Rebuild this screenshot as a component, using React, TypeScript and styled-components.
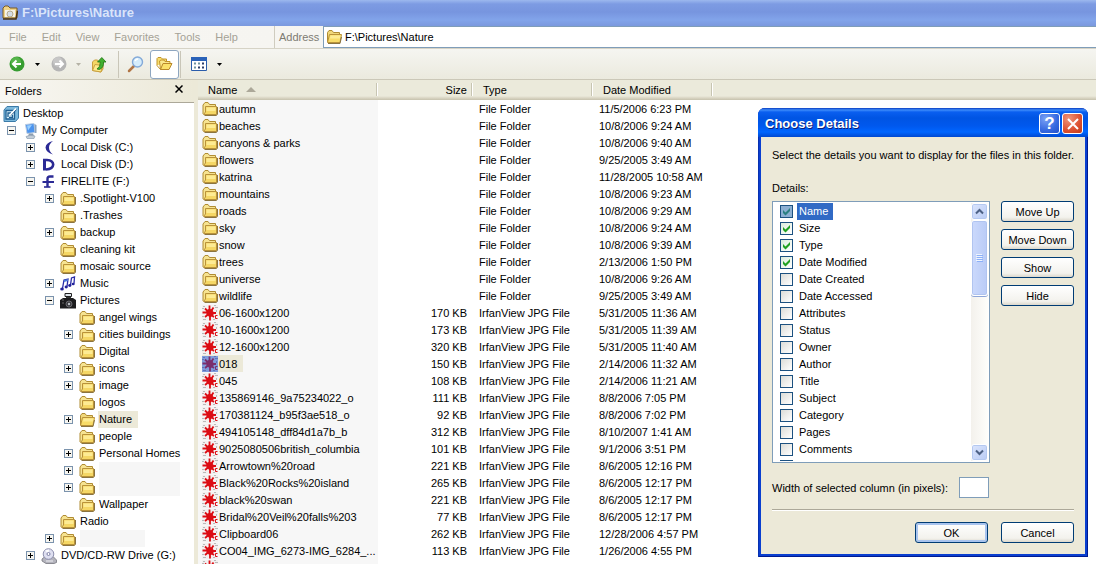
import React from "react";
import styled, { createGlobalStyle, css } from "styled-components";

const GlobalStyle = createGlobalStyle`
  * { box-sizing: border-box; }
  html, body { margin: 0; padding: 0; }
  body, button, input, table {
    font-family: "Liberation Sans", Arial, sans-serif;
    font-size: 11px;
    line-height: 16px;
    color: #000;
  }
  button { cursor: default; }
`;

const Window = styled.div`
  position: relative;
  display: flex;
  flex-direction: column;
  height: 100vh;
  min-height: 560px;
  overflow: hidden;
  background: #fff;
`;

/* ---------- window chrome ---------- */

const TitleBar = styled.header`
  display: flex;
  align-items: center;
  gap: 4px;
  flex: none;
  height: 26px;
  padding: 0 0 0 2px;
  background: linear-gradient(#9cb8ee 0, #7d9be3 4px, #7795df 12px, #82a4ea 20px, #7b99de 26px);
  color: #d9e4fa;
`;

const WindowTitle = styled.h1`
  margin: 0;
  font-size: 13px;
  line-height: 16px;
  font-weight: bold;
`;

const MenuRow = styled.div`
  display: flex;
  flex: none;
  height: 23px;
  background: linear-gradient(90deg, #f7f6f2, #f3f2ee);
  border-bottom: 1px solid #d6d3c6;
`;

const MenuBar = styled.nav`
  display: flex;
  align-items: center;
  width: 275px;
  flex: none;
  padding-left: 2px;
  border-right: 1px solid #cfccbf;
`;

const MenuItem = styled.button`
  padding: 0 8px 0 7px;
  border: 0;
  background: none;
  color: #a5a296;
`;

const AddressLabel = styled.label`
  display: flex;
  align-items: center;
  width: 48px;
  flex: none;
  padding-left: 4px;
  color: #7d7b72;
`;

const AddressBox = styled.div`
  display: flex;
  flex: 1;
  align-items: center;
  gap: 3px;
  padding-left: 2px;
  background: #fff;
  border: 1px solid #7f9db9;
  border-right: 0;
`;

const AddressInput = styled.input`
  flex: 1;
  min-width: 0;
  padding: 0;
  border: 0;
  outline: 0;
  background: none;
`;

const ToolBar = styled.div`
  display: flex;
  align-items: center;
  flex: none;
  height: 31px;
  padding-left: 8px;
  background: linear-gradient(#f5f5f1, #ebeade);
  border-bottom: 1px solid #cbc8b8;
`;

const ToolButton = styled.button<{ $w: number; $pressed?: boolean }>`
  display: flex;
  align-items: center;
  justify-content: center;
  width: ${(p) => p.$w}px;
  height: 29px;
  padding: 0;
  border: 1px solid transparent;
  border-radius: 3px;
  background: none;
  ${(p) =>
    p.$pressed &&
    css`
      background: #fff;
      border-color: #8ea6c0;
    `}
`;

const Divider = styled.span<{ $space?: boolean }>`
  width: 1px;
  height: 27px;
  margin: 0 1px 0 ${(p) => (p.$space ? 9 : 1)}px;
  background: #c9c6b8;
`;

const Main = styled.main`
  display: flex;
  flex: 1;
  min-height: 0;
`;

/* ---------- folder tree ---------- */

const Sidebar = styled.aside`
  display: flex;
  flex-direction: column;
  width: 194px;
  flex: none;
`;

const SidebarHead = styled.div`
  display: flex;
  align-items: center;
  justify-content: space-between;
  height: 23px;
  flex: none;
  padding: 0 11px 0 5px;
  background: linear-gradient(90deg, #f8f7f3, #ece9d8);
  border-bottom: 1px solid #aca899;
`;

const CloseButton = styled.button`
  display: flex;
  align-items: center;
  height: 16px;
  padding: 0 0 5px;
  border: 0;
  background: none;
`;

const Tree = styled.ul`
  flex: 1;
  min-height: 0;
  overflow: hidden;
  margin: 0;
  padding: 2px 0 0;
  list-style: none;
  background: #fff;
`;

const TreeRow = styled.li<{ $level: number }>`
  display: flex;
  align-items: center;
  height: 17px;
  padding-left: ${(p) => 3 + 19 * Math.max(0, p.$level - 1)}px;
`;

const ExpanderSlot = styled.span`
  display: flex;
  width: 19px;
  flex: none;
  padding-left: 4px;
`;

const Expander = styled.button`
  width: 9px;
  height: 9px;
  padding: 0;
  display: flex;
  border: 0;
  background: none;
`;

const TreeLabel = styled.span<{ $selected?: boolean }>`
  margin-left: 3px;
  padding: 0 6px 0 1px;
  line-height: 17px;
  white-space: nowrap;
  background: ${(p) => (p.$selected ? "#ece9d8" : "transparent")};
`;

const BlankLabel = styled.span<{ $w: number }>`
  width: ${(p) => p.$w}px;
  height: 17px;
  margin-left: 4px;
  background: #f6f6f6;
`;

const Splitter = styled.div`
  width: 4px;
  flex: none;
  background: #ece9d8;
`;

/* ---------- file list ---------- */

const ListPane = styled.section`
  flex: 1;
  min-width: 0;
  overflow: hidden;
  background: #fff;
`;

const FileTable = styled.table`
  width: 100%;
  table-layout: fixed;
  border-collapse: separate;
  border-spacing: 0;
`;

const Col = styled.col<{ $w?: number }>`
  width: ${(p) => (p.$w ? `${p.$w}px` : "auto")};
`;

const HeadCell = styled.th<{ $right?: boolean }>`
  position: relative;
  height: 20px;
  padding: 0 6px 0 10px;
  font-weight: normal;
  text-align: ${(p) => (p.$right ? "right" : "left")};
  background: linear-gradient(#ebeadb 0, #ebeadb 16px, #d9d5c3 18px, #c6c2ae 20px);
  &:not(:last-child)::after {
    content: "";
    position: absolute;
    right: 0;
    top: 3px;
    width: 2px;
    height: 13px;
    background: linear-gradient(90deg, #c7c5b2 50%, #fff 50%);
  }
`;

const SortArrow = styled.span`
  display: inline-block;
  margin-left: 9px;
  border: 5px solid transparent;
  border-top: 0;
  border-bottom-color: #aca899;
  vertical-align: 2px;
`;

const Cell = styled.td<{ $right?: boolean; $name?: boolean }>`
  height: 17px;
  padding: 0 6px;
  white-space: nowrap;
  text-align: ${(p) => (p.$right ? "right" : "left")};
  ${(p) =>
    p.$name &&
    css`
      padding: 0 0 0 4px;
      background: #f7f7f7;
    `}
`;

const FileName = styled.span<{ $selected?: boolean }>`
  display: flex;
  align-items: center;
  width: max-content;
  height: 17px;
  padding-right: 6px;
  gap: 1px;
  ${(p) =>
    p.$selected &&
    css`
      background: #ece9d8;
    `}
`;

/* ---------- dialog ---------- */

const Dialog = styled.section`
  position: absolute;
  top: 108px;
  right: 8px;
  width: 330px;
  padding: 0 3px 3px;
  background: #0a3fd0;
  border-radius: 7px 7px 0 0;
  box-shadow: inset 1px 0 #0831b0, inset -1px -1px #001a90;
`;

const DialogTitle = styled.div`
  display: flex;
  align-items: center;
  gap: 2px;
  height: 29px;
  margin: 0 -3px;
  padding: 2px 5px 0 7px;
  border-radius: 7px 7px 0 0;
  background: linear-gradient(#0a3cc0 0, #3d8cfa 2px, #0a5ff0 4px, #0054e3 10px, #0058ee 18px, #0066ff 24px, #0048d0 29px);
`;

const DialogHeading = styled.h2`
  flex: 1;
  margin: 0;
  font-size: 13px;
  line-height: 16px;
  color: #fff;
  text-shadow: 1px 1px #0f1f78;
`;

const CaptionButton = styled.button<{ $danger?: boolean }>`
  display: flex;
  align-items: center;
  justify-content: center;
  width: 21px;
  height: 21px;
  padding: 0;
  border: 1px solid #fff;
  border-radius: 3px;
  color: #fff;
  font-size: 17px;
  font-weight: bold;
  background: ${(p) =>
    p.$danger
      ? "radial-gradient(circle at 30% 25%, #f0957a, #dc5030 60%, #c03a18)"
      : "radial-gradient(circle at 30% 25%, #7ba2f5, #3568e0 60%, #2350c8)"};
`;

const DialogBody = styled.form`
  display: flex;
  flex-direction: column;
  padding: 10px 11px 11px;
  background: #ece9d8;
`;

const Text = styled.p<{ $gap: number }>`
  margin: 0 0 ${(p) => p.$gap}px;
  white-space: nowrap;
`;

const Columns = styled.div`
  display: flex;
  gap: 11px;
`;

const DetailBox = styled.div`
  display: flex;
  flex: 1;
  height: 262px;
  padding: 1px;
  border: 1px solid #7f9db9;
  background: #fff;
`;

const DetailList = styled.div`
  flex: 1;
  overflow: hidden;
`;

const DetailRow = styled.label`
  display: flex;
  align-items: center;
  height: 17px;
  padding-left: 6px;
`;

const Check = styled.input<{ $dim?: boolean }>`
  appearance: none;
  width: 13px;
  height: 13px;
  flex: none;
  margin: 0 4px 0 0;
  border: 1px solid #1c5180;
  background: linear-gradient(135deg, #dcdcd7, #fff);
  &:checked {
    background: url("data:image/svg+xml,%3Csvg xmlns='http://www.w3.org/2000/svg' width='11' height='11'%3E%3Cpath d='M2 4v3l2.500 2.500L9 5V2L4.500 6.500z' fill='%2321a121'/%3E%3C/svg%3E"),
      linear-gradient(135deg, #dcecdc, #fff);
  }
  ${(p) =>
    p.$dim &&
    css`
      &:checked {
        background: url("data:image/svg+xml,%3Csvg xmlns='http://www.w3.org/2000/svg' width='11' height='11'%3E%3Cpath d='M2 4v3l2.500 2.500L9 5V2L4.500 6.500z' fill='%232a7f80'/%3E%3C/svg%3E"),
          #8cafd2;
      }
    `}
`;

const DetailName = styled.span<{ $selected?: boolean }>`
  padding: 0 5px 0 2px;
  line-height: 17px;
  ${(p) =>
    p.$selected &&
    css`
      background: #316ac5;
      color: #fff;
    `}
`;

const ScrollTrack = styled.div`
  display: flex;
  flex-direction: column;
  width: 17px;
  flex: none;
  background: linear-gradient(90deg, #f3f1ec, #fefefb);
`;

const ScrollButton = styled.button`
  display: flex;
  align-items: center;
  justify-content: center;
  height: 17px;
  flex: none;
  padding: 0;
  border: 1px solid #fff;
  border-radius: 3px;
  background: linear-gradient(135deg, #dbe5fd, #b9cbf4);
  box-shadow: inset 0 0 0 1px #b4c8f0;
`;

const ScrollThumb = styled.div`
  display: flex;
  align-items: center;
  justify-content: center;
  height: 76px;
  border: 1px solid #fff;
  border-radius: 3px;
  background: linear-gradient(90deg, #cbd9fc, #b9cbf6);
  box-shadow: inset 0 0 0 1px #b0c4f0, 0 1px #8ea6d8;
`;

const ScrollSpace = styled.div`
  flex: 1;
`;

const ButtonStack = styled.div`
  display: flex;
  flex-direction: column;
  gap: 7px;
`;

const PushButton = styled.button<{ $primary?: boolean }>`
  width: 73px;
  height: 21px;
  padding: 0;
  border: 1px solid #003c74;
  border-radius: 3px;
  background: linear-gradient(#fff, #f3f2ed 80%, #dcd8cc);
  ${(p) => p.$primary && "box-shadow: inset 0 0 0 2px #a9c4ee;"}
`;

const WidthRow = styled.div`
  display: flex;
  align-items: center;
  justify-content: space-between;
  width: 217px;
  margin-top: 14px;
`;

const WidthInput = styled.input`
  width: 30px;
  height: 21px;
  padding: 0 2px;
  border: 1px solid #7f9db9;
  background: #fff;
`;

const Rule = styled.hr`
  width: 100%;
  height: 2px;
  margin: 11px 0;
  border: 0;
  background: linear-gradient(#aca899 50%, #fff 50%);
`;

const Actions = styled.div`
  display: flex;
  justify-content: flex-end;
  gap: 13px;
`;

/* ---------- icons ---------- */

const Icon = styled.svg`
  display: block;
  flex: none;
`;

const FolderIcon = () => (
  <Icon width="16" height="16" viewBox="0 0 16 16">
    <path d="M1 13V4L3 1.500H6L7.500 3.500H13.500V6" fill="#f6e391" stroke="#b08c33" />
    <path d="M2.500 14.500H14l1.500-1.500V6" fill="none" stroke="#8a7440" strokeWidth="1.200" />
    <path d="M3.500 5.500H14.500V13.500H1.500L3.500 11z" fill="#f5d765" stroke="#b9923a" />
    <path d="M4.500 6.500H13.500V10H4.500z" fill="#fdeb94" />
  </Icon>
);

const OpenFolderIcon = () => (
  <Icon width="16" height="16" viewBox="0 0 16 16">
    <path d="M1.500 13V3.500L3 1.500H6L7.500 3.500H13.500V6" fill="#f0d77a" stroke="#b08c33" />
    <path d="M1.500 13.500L3.500 5.500H15.500L14 13.500z" fill="#f8dc68" stroke="#b9923a" />
    <path d="M4.500 6.500H14.500L14 9.500H4z" fill="#fdeb94" />
    <path d="M2 14.500H14L15.500 8" fill="none" stroke="#8a7440" />
  </Icon>
);

const TitleFolderIcon = () => (
  <Icon width="16" height="16" viewBox="0 0 16 16">
    <path d="M1 13V3L3 1H6L8 3H15V13z" fill="#f0d488" stroke="#7b5b22" />
    <path d="M3 5H13V12H3z" fill="#f6f3ea" />
    <circle cx="8" cy="9" r="3" fill="#d5dde6" stroke="#b5a98a" />
    <path d="M1 14H14L15.500 6" fill="none" stroke="#4b3515" strokeWidth="1.500" />
  </Icon>
);

const BackIcon = ({ disabled = false }: { disabled?: boolean }) => (
  <Icon width="16" height="16" viewBox="0 0 16 16">
    <circle cx="8" cy="8" r="7.500" fill={disabled ? "#b5b5b5" : "#379d31"} />
    <circle cx="7" cy="6" r="5" fill={disabled ? "#cecece" : "#62bd55"} opacity="0.700" />
    <path
      d={disabled ? "M4 8H12M8.500 4.500L12 8L8.500 11.500" : "M12 8H4M7.500 4.500L4 8L7.500 11.500"}
      fill="none"
      stroke="#fff"
      strokeWidth="2"
    />
  </Icon>
);

const DropIcon = ({ color = "#000" }: { color?: string }) => (
  <Icon width="5" height="3" viewBox="0 0 5 3">
    <path d="M0 0H5L2.500 3z" fill={color} />
  </Icon>
);

const UpIcon = () => (
  <Icon width="16" height="17" viewBox="0 0 16 17">
    <path d="M1.500 14.500V6L3.500 4H6.500L7.500 5.500H12V13L10 16z" fill="#f4d765" stroke="#c9a040" />
    <path d="M1.500 14.500L4 8.500L11.500 9.500L10 16z" fill="#fdeb8d" stroke="#c9a040" />
    <path d="M6 13Q9.500 11 9.300 6H6.500L10.800 1.500L15 6H12.500Q13 11.500 8.500 13.500z" fill="#41b02f" stroke="#1f7514" strokeWidth="0.800" />
  </Icon>
);

const SearchIcon = () => (
  <Icon width="17" height="17" viewBox="0 0 17 17">
    <path d="M2 15L7 10" stroke="#b17545" strokeWidth="2.500" strokeLinecap="round" />
    <circle cx="10.500" cy="6" r="5" fill="#d5ecfb" stroke="#83a9d8" strokeWidth="1.400" />
    <path d="M8 5Q9 3 11 3" fill="none" stroke="#fff" strokeWidth="1.500" />
  </Icon>
);

const FoldersIcon = () => (
  <Icon width="17" height="16" viewBox="0 0 17 16">
    <path d="M1 9.500V2.500L2 1.500H5L6.500 3H10.500V6" fill="#f7dd6d" stroke="#c2942b" />
    <path d="M4.500 13.500L3.500 5L5 4H8L9 5.500H14V8" fill="#fae88d" stroke="#c2942b" />
    <path d="M1 9.500L4.500 13.500" stroke="#c2942b" />
    <path d="M4.500 13.500L7 7.500H16L13 13.500z" fill="#fbe16a" stroke="#b9882a" />
  </Icon>
);

const ViewsIcon = () => (
  <Icon width="16" height="14" viewBox="0 0 16 14">
    <path d="M0.500 0.500H15.500V13.500H0.500z" fill="#fff" stroke="#2a5caa" />
    <path d="M0 0H16V4H0z" fill="#2a62b8" />
    <path d="M3 5.500h2v2h-2zM7 5.500h2v2h-2zM3 9.500h2v2h-2z" fill="#6e93a0" />
    <path d="M11 5.500h2v2h-2zM7 9.500h2v2h-2zM11 9.500h2v2h-2z" fill="#2c3e6b" />
  </Icon>
);

const CloseIcon = () => (
  <Icon width="8" height="8" viewBox="0 0 8 8">
    <path d="M0.500 0.500L7.500 7.500M7.500 0.500L0.500 7.500" stroke="#000" strokeWidth="1.500" />
  </Icon>
);

const DesktopIcon = () => (
  <Icon width="16" height="16" viewBox="0 0 16 16">
    <path d="M1 4L4 0.500H15.500V12L12.500 15.500H1z" fill="#7db9dc" stroke="#3b7ba8" />
    <path d="M3 4.500H11.500V13H3z" fill="#d8f1fb" stroke="#1f5f92" strokeWidth="1.300" />
    <path d="M5 11V7H8M6 11.500H9.500V9" fill="none" stroke="#1f5f92" strokeWidth="1.300" />
    <path d="M7 9L13 2.500" stroke="#fff" strokeWidth="1.800" />
    <path d="M8 9.500L13.500 3.500" stroke="#1f4f82" strokeWidth="0.800" />
  </Icon>
);

const ComputerIcon = () => (
  <Icon width="16" height="16" viewBox="0 0 16 16">
    <path d="M3.500 1.500L12 0.500L13 9.500L5 10.500z" fill="#4b93ee" stroke="#b9cbe0" />
    <path d="M5 2.500L10 2L6 7.500z" fill="#9bd0ff" />
    <path d="M12.500 1L14.500 2V10L13 10z" fill="#8aa2bd" />
    <path d="M7 10.500H11L12 13H6z" fill="#8c9db0" />
    <path d="M4 13.500Q8 11.500 13 13L12 15.500H5z" fill="#c4ced8" stroke="#8fa1b3" strokeWidth="0.700" />
  </Icon>
);

const DriveCIcon = () => (
  <Icon width="16" height="16" viewBox="0 0 16 16">
    <path d="M12 1Q5 2.500 4.500 7.500Q5 12.500 12 14.500Q8 11.500 8 7.500Q8 4 12 1z" fill="#2b2a95" />
  </Icon>
);

const DriveDIcon = () => (
  <Icon width="16" height="16" viewBox="0 0 16 16">
    <path d="M3.500 2V13.500" stroke="#2b2a95" strokeWidth="3" />
    <path d="M2 3H6Q12 3.500 12.200 7.500Q12 12 5 12.500" fill="none" stroke="#2b2a95" strokeWidth="2.600" />
  </Icon>
);

const DriveFIcon = () => (
  <Icon width="16" height="16" viewBox="0 0 16 16">
    <path d="M6.500 13V5Q6.500 2.500 9 2.500H12.500" fill="none" stroke="#2b2a95" strokeWidth="2.400" />
    <path d="M1.500 8H13" stroke="#2b2a95" strokeWidth="2" />
    <path d="M3 13H9.500" stroke="#2b2a95" strokeWidth="1.600" />
  </Icon>
);

const MusicIcon = () => (
  <Icon width="16" height="16" viewBox="0 0 16 16">
    <path d="M2.500 12.500L4 4L8 3L7 10.500M10.500 9L11.500 2L14.500 1L14 7.500" fill="none" stroke="#2a2ca8" strokeWidth="1.300" />
    <path d="M4 4L8 3V5L4 6z" fill="#4a78d8" />
    <ellipse cx="2" cy="13" rx="1.800" ry="1.500" fill="#23239a" />
    <ellipse cx="6.200" cy="11" rx="1.600" ry="1.400" fill="#23239a" />
    <ellipse cx="9.800" cy="9.500" rx="1.600" ry="1.400" fill="#23239a" />
    <ellipse cx="13.200" cy="8" rx="1.500" ry="1.300" fill="#23239a" />
  </Icon>
);

const CameraIcon = () => (
  <Icon width="16" height="16" viewBox="0 0 16 16">
    <path d="M5 0.500H11.500V3.500H5z" fill="#dfe6ec" stroke="#222" />
    <path d="M6 4H11V6H6z" fill="#333" />
    <path d="M0 7L3 5H13L16 7V15.500H0z" fill="#1c1c1e" />
    <circle cx="9" cy="11" r="3" fill="#3a3a3e" stroke="#6b6b70" />
    <circle cx="9" cy="11" r="1.200" fill="#b9bdc2" />
    <path d="M2 7H4M2 10H4" stroke="#666" />
  </Icon>
);

const DiscIcon = () => (
  <Icon width="16" height="16" viewBox="0 0 16 16">
    <path d="M1 11L4 8.500H12L15.500 12V14.500L13 15.500H5L1 13z" fill="#b4b4bd" stroke="#76767f" strokeWidth="0.800" />
    <circle cx="7.500" cy="6" r="5.300" fill="#dedff0" stroke="#8d8fae" />
    <path d="M7.500 6L4 2.500L8 1.500z" fill="#fff" />
    <circle cx="7.500" cy="6" r="1.500" fill="#fff" stroke="#7d7fa5" />
    <path d="M5 13H12" stroke="#f0f0f5" />
  </Icon>
);

const JpgIcon = ({ selected = false }: { selected?: boolean }) => {
  const ink = selected ? "#7b2e6d" : "#dc0d14";
  return (
    <Icon width="16" height="16" viewBox="0 0 16 16">
      <rect width="16" height="16" fill={selected ? "#7f9bdc" : "#f4f0f0"} />
      <path
        d="M1 1.500H3M0 3.500H2M12 0.500H14M13 2.500H16M14.500 5V7M0 11.500H2M1 14.500H4M11 14.500H13"
        stroke={selected ? "#5f74b8" : "#b9b9b9"}
      />
      <path d="M5 5.500L7 4.500L10 5L11 7V10L9 11.500L6.500 11L5 9.500z" fill={ink} stroke={ink} />
      <path d="M7.500 5V0.500M9.500 5.500L11.500 2.500M5.500 6L3 3.500M5 7.500H0.500M6 9.500L3 12M8 11V15.500M10 10.500L12 12M11 8H14" fill="none" stroke={ink} strokeWidth="1.800" />
      <path d="M15.500 10.500H13.500V13.500H15.500" fill="none" stroke={ink} />
    </Icon>
  );
};

const ExpanderIcon = ({ open }: { open: boolean }) => (
  <Icon width="9" height="9" viewBox="0 0 9 9">
    <rect x="0.500" y="0.500" width="8" height="8" fill="#f6f5f0" stroke="#7b93ad" />
    <path d={open ? "M2 4.500H7" : "M2 4.500H7M4.500 2V7"} stroke="#000" />
  </Icon>
);

const ChevronIcon = ({ down = false }: { down?: boolean }) => (
  <Icon width="9" height="7" viewBox="0 0 9 7">
    <path d={down ? "M1 1.500L4.500 5L8 1.500" : "M1 5.500L4.500 2L8 5.500"} fill="none" stroke="#4d6185" strokeWidth="2" />
  </Icon>
);

const GripIcon = () => (
  <Icon width="7" height="8" viewBox="0 0 7 8">
    <path d="M0 0.500H6M0 2.500H6M0 4.500H6M0 6.500H6" stroke="#eef4fe" />
    <path d="M1 1.500H7M1 3.500H7M1 5.500H7M1 7.500H7" stroke="#8cb0f8" />
  </Icon>
);

const DialogCloseIcon = () => (
  <Icon width="12" height="12" viewBox="0 0 12 12">
    <path d="M1 1L11 11M11 1L1 11" stroke="#fff" strokeWidth="2" />
  </Icon>
);

/* ---------- data ---------- */

type TreeItem = {
  level: number;
  label?: string;
  icon?: React.ReactNode;
  state?: "open" | "closed";
  selected?: boolean;
  blank?: number;
};

const tree: TreeItem[] = [
  { level: 0, label: "Desktop", icon: <DesktopIcon /> },
  { level: 1, label: "My Computer", icon: <ComputerIcon />, state: "open" },
  { level: 2, label: "Local Disk (C:)", icon: <DriveCIcon />, state: "closed" },
  { level: 2, label: "Local Disk (D:)", icon: <DriveDIcon />, state: "closed" },
  { level: 2, label: "FIRELITE (F:)", icon: <DriveFIcon />, state: "open" },
  { level: 3, label: ".Spotlight-V100", state: "closed" },
  { level: 3, label: ".Trashes" },
  { level: 3, label: "backup", state: "closed" },
  { level: 3, label: "cleaning kit" },
  { level: 3, label: "mosaic source" },
  { level: 3, label: "Music", icon: <MusicIcon />, state: "closed" },
  { level: 3, label: "Pictures", icon: <CameraIcon />, state: "open" },
  { level: 4, label: "angel wings" },
  { level: 4, label: "cities buildings", state: "closed" },
  { level: 4, label: "Digital" },
  { level: 4, label: "icons", state: "closed" },
  { level: 4, label: "image", state: "closed" },
  { level: 4, label: "logos" },
  { level: 4, label: "Nature", icon: <OpenFolderIcon />, state: "closed", selected: true },
  { level: 4, label: "people" },
  { level: 4, label: "Personal Homes", state: "closed" },
  { level: 4, state: "closed", blank: 81 },
  { level: 4, state: "closed", blank: 81 },
  { level: 4, label: "Wallpaper" },
  { level: 3, label: "Radio" },
  { level: 3, state: "closed", blank: 65 },
  { level: 2, label: "DVD/CD-RW Drive (G:)", icon: <DiscIcon />, state: "closed" },
];

const folders: [string, string][] = [
  ["autumn", "11/5/2006 6:23 PM"],
  ["beaches", "10/8/2006 9:24 AM"],
  ["canyons & parks", "10/8/2006 9:40 AM"],
  ["flowers", "9/25/2005 3:49 AM"],
  ["katrina", "11/28/2005 10:58 AM"],
  ["mountains", "10/8/2006 9:23 AM"],
  ["roads", "10/8/2006 9:29 AM"],
  ["sky", "10/8/2006 9:24 AM"],
  ["snow", "10/8/2006 9:39 AM"],
  ["trees", "2/13/2006 1:50 PM"],
  ["universe", "10/8/2006 9:26 AM"],
  ["wildlife", "9/25/2005 3:49 AM"],
];

const files: [string, string, string][] = [
  ["06-1600x1200", "170 KB", "5/31/2005 11:36 AM"],
  ["10-1600x1200", "173 KB", "5/31/2005 11:39 AM"],
  ["12-1600x1200", "320 KB", "5/31/2005 11:40 AM"],
  ["018", "150 KB", "2/14/2006 11:32 AM"],
  ["045", "108 KB", "2/14/2006 11:21 AM"],
  ["135869146_9a75234022_o", "111 KB", "8/8/2006 7:05 PM"],
  ["170381124_b95f3ae518_o", "92 KB", "8/8/2006 7:02 PM"],
  ["494105148_dff84d1a7b_b", "312 KB", "8/10/2007 1:41 AM"],
  ["9025080506british_columbia", "101 KB", "9/1/2006 3:51 PM"],
  ["Arrowtown%20road", "221 KB", "8/6/2005 12:16 PM"],
  ["Black%20Rocks%20island", "265 KB", "8/6/2005 12:17 PM"],
  ["black%20swan", "221 KB", "8/6/2005 12:17 PM"],
  ["Bridal%20Veil%20falls%203", "77 KB", "8/6/2005 12:17 PM"],
  ["Clipboard06", "262 KB", "12/28/2006 4:57 PM"],
  ["CO04_IMG_6273-IMG_6284_...", "113 KB", "1/26/2006 4:55 PM"],
];

const details = [
  "Name", "Size", "Type", "Date Modified", "Date Created", "Date Accessed", "Attributes", "Status",
  "Owner", "Author", "Title", "Subject", "Category", "Pages", "Comments", "",
];

const menus = ["File", "Edit", "View", "Favorites", "Tools", "Help"];

/* ---------- page ---------- */

function FolderTree() {
  return (
    <Sidebar>
      <SidebarHead>
        <span>Folders</span>
        <CloseButton aria-label="Close folders">
          <CloseIcon />
        </CloseButton>
      </SidebarHead>
      <Tree>
        {tree.map((item, i) => (
          <TreeRow key={i} $level={item.level}>
            {item.level > 0 && (
              <ExpanderSlot>
                {item.state && (
                  <Expander aria-label={item.state === "open" ? "Collapse" : "Expand"}>
                    <ExpanderIcon open={item.state === "open"} />
                  </Expander>
                )}
              </ExpanderSlot>
            )}
            {item.icon ?? <FolderIcon />}
            {item.blank ? (
              <BlankLabel $w={item.blank} />
            ) : (
              <TreeLabel $selected={item.selected}>{item.label}</TreeLabel>
            )}
          </TreeRow>
        ))}
      </Tree>
    </Sidebar>
  );
}

function FileList() {
  return (
    <ListPane>
      <FileTable>
        <colgroup>
          <Col $w={180} />
          <Col $w={95} />
          <Col $w={120} />
          <Col $w={120} />
          <Col />
        </colgroup>
        <thead>
          <tr>
            <HeadCell>
              Name
              <SortArrow />
            </HeadCell>
            <HeadCell $right>Size</HeadCell>
            <HeadCell>Type</HeadCell>
            <HeadCell>Date Modified</HeadCell>
            <HeadCell />
          </tr>
        </thead>
        <tbody>
          {folders.map(([name, date]) => (
            <tr key={name}>
              <Cell $name>
                <FileName>
                  <FolderIcon />
                  {name}
                </FileName>
              </Cell>
              <Cell />
              <Cell>File Folder</Cell>
              <Cell>{date}</Cell>
              <Cell />
            </tr>
          ))}
          {files.map(([name, size, date]) => (
            <tr key={name}>
              <Cell $name>
                <FileName $selected={name === "018"}>
                  <JpgIcon selected={name === "018"} />
                  {name}
                </FileName>
              </Cell>
              <Cell $right>{size}</Cell>
              <Cell>IrfanView JPG File</Cell>
              <Cell>{date}</Cell>
              <Cell />
            </tr>
          ))}
          <tr>
            <Cell $name>
              <FileName>
                <JpgIcon />
              </FileName>
            </Cell>
          </tr>
        </tbody>
      </FileTable>
    </ListPane>
  );
}

function ChooseDetails() {
  return (
    <Dialog role="dialog" aria-labelledby="dialog-title">
      <DialogTitle>
        <DialogHeading id="dialog-title">Choose Details</DialogHeading>
        <CaptionButton aria-label="Help">?</CaptionButton>
        <CaptionButton $danger aria-label="Close">
          <DialogCloseIcon />
        </CaptionButton>
      </DialogTitle>
      <DialogBody onSubmit={(e) => e.preventDefault()}>
        <Text $gap={17}>Select the details you want to display for the files in this folder.</Text>
        <Text $gap={5}>Details:</Text>
        <Columns>
          <DetailBox>
            <DetailList>
              {details.map((name, i) => (
                <DetailRow key={i}>
                  <Check type="checkbox" defaultChecked={i < 4} $dim={i === 0} />
                  <DetailName $selected={i === 0}>{name}</DetailName>
                </DetailRow>
              ))}
            </DetailList>
            <ScrollTrack>
              <ScrollButton type="button" aria-label="Scroll up">
                <ChevronIcon />
              </ScrollButton>
              <ScrollThumb>
                <GripIcon />
              </ScrollThumb>
              <ScrollSpace />
              <ScrollButton type="button" aria-label="Scroll down">
                <ChevronIcon down />
              </ScrollButton>
            </ScrollTrack>
          </DetailBox>
          <ButtonStack>
            <PushButton type="button">Move Up</PushButton>
            <PushButton type="button">Move Down</PushButton>
            <PushButton type="button">Show</PushButton>
            <PushButton type="button">Hide</PushButton>
          </ButtonStack>
        </Columns>
        <WidthRow>
          <label htmlFor="column-width">Width of selected column (in pixels):</label>
          <WidthInput id="column-width" />
        </WidthRow>
        <Rule />
        <Actions>
          <PushButton $primary>OK</PushButton>
          <PushButton type="button">Cancel</PushButton>
        </Actions>
      </DialogBody>
    </Dialog>
  );
}

export default function App() {
  return (
    <Window>
      <GlobalStyle />
      <TitleBar>
        <TitleFolderIcon />
        <WindowTitle>F:\Pictures\Nature</WindowTitle>
      </TitleBar>
      <MenuRow>
        <MenuBar>
          {menus.map((m) => (
            <MenuItem key={m}>{m}</MenuItem>
          ))}
        </MenuBar>
        <AddressLabel htmlFor="address">Address</AddressLabel>
        <AddressBox>
          <OpenFolderIcon />
          <AddressInput id="address" defaultValue="F:\Pictures\Nature" />
        </AddressBox>
      </MenuRow>
      <ToolBar>
        <ToolButton $w={17} aria-label="Back">
          <BackIcon />
        </ToolButton>
        <ToolButton $w={24} aria-label="Back history">
          <DropIcon />
        </ToolButton>
        <ToolButton $w={19} aria-label="Forward">
          <BackIcon disabled />
        </ToolButton>
        <ToolButton $w={21} aria-label="Forward history">
          <DropIcon color="#b5b2a5" />
        </ToolButton>
        <ToolButton $w={20} aria-label="Up">
          <UpIcon />
        </ToolButton>
        <Divider $space />
        <ToolButton $w={30} aria-label="Search">
          <SearchIcon />
        </ToolButton>
        <ToolButton $w={29} $pressed aria-label="Folders">
          <FoldersIcon />
        </ToolButton>
        <Divider />
        <ToolButton $w={34} aria-label="Views">
          <ViewsIcon />
        </ToolButton>
        <ToolButton $w={6} aria-label="View options">
          <DropIcon />
        </ToolButton>
      </ToolBar>
      <Main>
        <FolderTree />
        <Splitter />
        <FileList />
      </Main>
      <ChooseDetails />
    </Window>
  );
}
